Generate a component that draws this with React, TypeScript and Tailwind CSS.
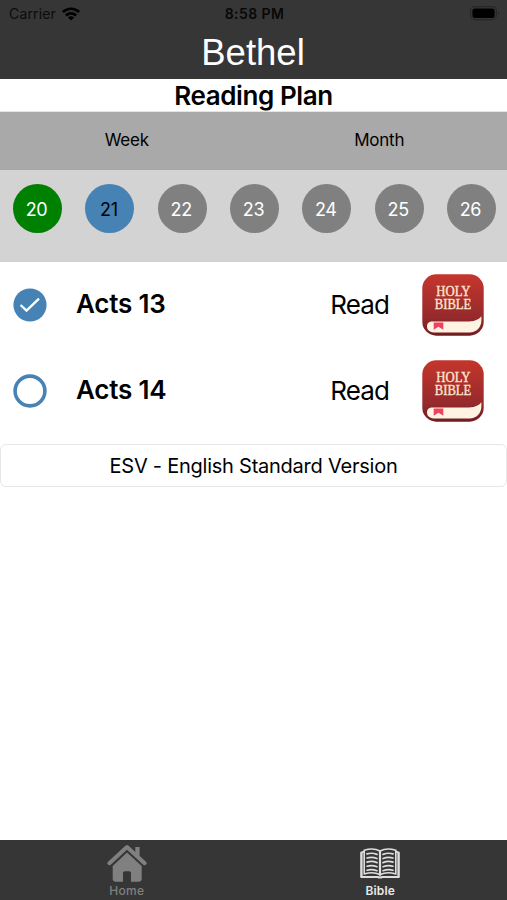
import { useState } from "react";

interface Day {
  date: number;
  status: "done" | "current" | "pending";
}

interface Reading {
  title: string;
  read: boolean;
}

const days: Day[] = [
  { date: 20, status: "done" },
  { date: 21, status: "current" },
  { date: 22, status: "pending" },
  { date: 23, status: "pending" },
  { date: 24, status: "pending" },
  { date: 25, status: "pending" },
  { date: 26, status: "pending" },
];

const dayColors = {
  done: "bg-[#008000] text-white",
  current: "bg-[#4682b4] text-black",
  pending: "bg-[#808080] text-white",
};

const WifiIcon = () => (
  <svg width="18" height="14" viewBox="0 0 18 14" fill="none" stroke="#000" strokeWidth="2.7">
    <path d="M0.9 5.1C5.5 0.6 12.5 0.6 17.1 5.1" />
    <path d="M3.9 8.5C6.8 5.7 11.2 5.7 14.1 8.5" />
    <path d="M9 13.4L5.9 10.5C7.6 8.9 10.4 8.9 12.1 10.5Z" fill="#000" stroke="none" />
  </svg>
);

const BatteryIcon = () => (
  <svg width="30" height="15" viewBox="0 0 30 15">
    <rect x="0.6" y="0.6" width="25.8" height="13" rx="4" fill="none" stroke="#272727" strokeWidth="1.1" />
    <rect x="2.4" y="2.5" width="22.2" height="9.4" rx="2.5" fill="#000" />
    <path d="M27.8 5.2C29.2 5.9 29.2 8.3 27.8 9Z" fill="#222" />
  </svg>
);

const HolyBibleIcon = ({ id }: { id: string }) => (
  <svg width="62" height="62" viewBox="0 0 62 62">
    <defs>
      <linearGradient id={id} x1="0" y1="0" x2="0" y2="1">
        <stop offset="0" stopColor="#c5362d" />
        <stop offset="0.7" stopColor="#962a2c" />
        <stop offset="1" stopColor="#6f1d20" />
      </linearGradient>
    </defs>
    <rect x="0.3" y="0.3" width="61.4" height="61.4" rx="14" fill={`url(#${id})`} />
    <path
      d="M10.5 47.5H44C52 47.5 56.5 46 59.4 42.2V46C59.4 53.5 54.5 58.5 47.5 58.5H13.5C8.5 58.5 5 56.5 5 52.4C5 49.3 7 47.5 10.5 47.5Z"
      fill="#fff3e3"
    />
    <path d="M11.7 48.5H21.3V55.8L16.5 52.8L11.7 55.8Z" fill="#f0425e" />
    <g
      fill="#fbe4cf"
      stroke="#fbe4cf"
      strokeWidth="0.4"
      fontSize="13.8"
      textAnchor="middle"
      className="font-['Liberation_Serif',serif]"
    >
      <text x="31.3" y="21.7" textLength="34" lengthAdjust="spacingAndGlyphs">
        HOLY
      </text>
      <text x="31" y="35" textLength="36.5" lengthAdjust="spacingAndGlyphs">
        BIBLE
      </text>
    </g>
  </svg>
);

const HomeIcon = () => (
  <svg width="40" height="38" viewBox="0 0 40 38" fill="#808080">
    <path d="M20 8.5L34.7 22V34.5Q34.7 37.8 31.5 37.8H24V29Q24 27.3 22.3 27.3H17.7Q16 27.3 16 29V37.8H9Q5.7 37.8 5.7 34.5V22Z" />
    <path d="M2.4 19.2L20 3L37.6 19.2" fill="none" stroke="#808080" strokeWidth="4" strokeLinecap="round" strokeLinejoin="round" />
    <path d="M28.3 3H32.6V14L28.3 10Z" />
  </svg>
);

const BookIcon = () => (
  <svg width="40" height="31" viewBox="0 0 40 31" fill="none" stroke="#dedede" strokeLinecap="round" strokeLinejoin="round">
    <path d="M20 3C15.5 0.6 9.5 0.6 4.2 2.2V26C9.5 24.3 15.5 24.5 20 26.5C24.5 24.5 30.5 24.3 35.8 26V2.2C30.5 0.6 24.5 0.6 20 3Z" strokeWidth="1.6" />
    <path d="M4 3.6L1.2 4.6V29H17.8Q20 30 22.2 29H38.8V4.6L36 3.6" strokeWidth="2" />
    <path d="M2.6 5V27.5M37.4 5V27.5" strokeWidth="1" opacity="0.6" />
    <path d="M20 3V27" strokeWidth="2.2" />
    <path
      d="M7 5.9C10 5 14 5.2 17 6.4M7 10C10 9.1 14 9.3 17 10.5M7 14.1C10 13.2 14 13.4 17 14.6M7 18.2C10 17.3 14 17.5 17 18.7M7 22.2C10 21.3 14 21.5 17 22.7M23 6.4C26 5.2 30 5 33 5.9M23 10.5C26 9.3 30 9.1 33 10M23 14.6C26 13.4 30 13.2 33 14.1M23 18.7C26 17.5 30 17.3 33 18.2M23 22.7C26 21.5 30 21.3 33 22.2"
      strokeWidth="1.7"
    />
  </svg>
);

const CheckCircle = ({ checked }: { checked: boolean }) => (
  <svg width="34" height="34" viewBox="0 0 34 34" fill="none">
    {checked ? (
      <>
        <circle cx="17" cy="17" r="16.6" fill="#4682b4" />
        <path d="M7.6 17L13.5 22.7L26 10.7" stroke="#fff" strokeWidth="2.3" />
      </>
    ) : (
      <circle cx="17" cy="17" r="14.9" stroke="#4682b4" strokeWidth="3.6" />
    )}
  </svg>
);

const App = () => {
  const [readings, setReadings] = useState<Reading[]>([
    { title: "Acts 13", read: true },
    { title: "Acts 14", read: false },
  ]);

  const handleToggle = (title: string) => {
    setReadings(readings.map((r) => (r.title === title ? { ...r, read: !r.read } : r)));
  };

  return (
    <div className="flex h-screen w-full flex-col overflow-hidden bg-white font-['Inter',sans-serif] text-black">
      <header className="h-[79px] shrink-0 bg-[#363636]">
        <div className="grid h-[27px] grid-cols-3 items-center pr-[7px] pl-[9px]">
          <div className="flex items-center gap-[6px] text-[14px] tracking-[0.15px] text-[#0c0c0c]">
            Carrier
            <WifiIcon />
          </div>
          <div className="text-center text-[14px] font-semibold tracking-[0.4px] whitespace-nowrap text-[#080808]">8:58 PM</div>
          <div className="flex justify-end">
            <BatteryIcon />
          </div>
        </div>
        <h1 className="pr-px text-center font-['Liberation_Sans',sans-serif] text-[36.5px] leading-[52px] text-white">Bethel</h1>
      </header>

      <h2 className="h-[33px] shrink-0 border-b border-[#e4e4e4] text-center text-[26px] leading-[33px] font-semibold tracking-[-0.4px]">
        Reading Plan
      </h2>

      <div className="grid h-[58px] shrink-0 grid-cols-2 items-center bg-[#a9a9a9] text-center text-[17px] tracking-[-0.25px]">
        <button>Week</button>
        <button className="pr-[2px]">Month</button>
      </div>

      <div className="flex h-[92px] shrink-0 justify-between bg-[#d3d3d3] pt-[14px] pr-[11px] pl-[13px]">
        {days.map((day) => (
          <div
            key={day.date}
            className={`flex size-[49px] items-center justify-center rounded-full pt-px pr-[2px] text-[18px] tracking-[-0.4px] ${dayColors[day.status]}`}
          >
            {day.date}
          </div>
        ))}
      </div>

      <main className="flex-1">
        {readings.map((reading, index) => (
          <div key={reading.title} className="flex h-[86px] items-center pr-[23px] pl-[13px]">
            <button onClick={() => handleToggle(reading.title)}>
              <CheckCircle checked={reading.read} />
            </button>
            <span className="ml-[29px] flex-1 pb-1 text-[26px] font-semibold tracking-[-0.2px]">{reading.title}</span>
            <span className="mr-[33px] pb-[2px] text-[26px] tracking-[-0.9px]">Read</span>
            <HolyBibleIcon id={`cover${index}`} />
          </div>
        ))}
        <div className="mt-[10px] flex h-[43px] items-center justify-center rounded-md border border-[#e6e6e6] text-[20px] tracking-[-0.24px]">
          ESV - English Standard Version
        </div>
      </main>

      <nav className="grid h-[60px] shrink-0 grid-cols-2 bg-[#363636] text-[12px] leading-[14px]">
        <div className="flex flex-col items-center pt-[4px] text-[#808080]">
          <HomeIcon />
          <span className="mt-[2px] font-medium tracking-[0.3px]">Home</span>
        </div>
        <div className="flex flex-col items-center pt-[8px] text-[#e8e8e8]">
          <BookIcon />
          <span className="mt-[5px] font-semibold tracking-[0.1px]">Bible</span>
        </div>
      </nav>
    </div>
  );
};

export default App;
